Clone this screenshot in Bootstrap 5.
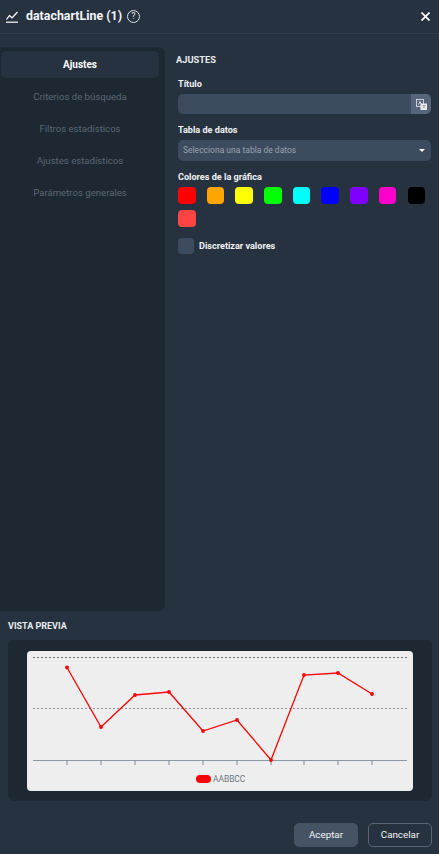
<!DOCTYPE html>
<html lang="es">

<head>
    <title>datachartLine</title>
    <link rel="stylesheet" href="https://cdn.jsdelivr.net/npm/bootstrap@5.3.0/dist/css/bootstrap.min.css">
    <style>
        html, body { height: 854px; overflow: hidden; }
        body { background: #273240; font-family: Roboto, "Liberation Sans", sans-serif; color: #fff; font-size: 9.5px; }
        .shell { height: 854px; }
        .top-bar { height: 34px; padding: 0 9px 0 6px; border-bottom: 1px solid #303c4b; }
        .top-title { font-size: 12.4px; font-weight: 700; color: #f2f4f6; margin-left: 8px; }
        .help-dot { width: 13px; height: 13px; border: 1px solid #dfe3e8; border-radius: 50%; font-size: 9px; line-height: 11px; text-align: center; margin-left: 5px; color: #dfe3e8; }
        .main-area { height: 578px; padding-top: 13px; }
        .side-menu { width: 165px; height: 564px; background: #1e2832; border-radius: 0 7px 7px 0; padding: 4px 6px 0 1px; flex: none; }
        .side-item { height: 32px; line-height: 28px; text-align: center; color: #5a6773; font-size: 9.6px; }
        .side-item.on { height: 27px; line-height: 27px; margin-bottom: 5px; background: #273240; color: #fff; font-weight: 700; font-size: 10px; border-radius: 5px; }
        .form-area { padding: 7px 8px 0 11px; flex-grow: 1; }
        .sect-title { font-size: 9.3px; font-weight: 700; color: #e8ebee; line-height: 11px; margin-bottom: 14px; }
        .fld-label { font-size: 9.1px; font-weight: 700; color: #f0f2f4; line-height: 11px; margin: 0 0 4px 2px; display: block; }
        .fld-input { margin-left: 2px; height: 20px; background: #3d4b5e; border-radius: 5px; overflow: hidden; margin-bottom: 11px; }
        .fld-input span { width: 20px; background: #57657a; }
        .fld-select { margin-left: 2px; height: 21px; background: #3d4b5e; border-radius: 5px; padding: 0 6px 0 5px; color: #97a2b0; font-size: 8.5px; margin-bottom: 11px; }
        .caret-down { width: 0; height: 0; border-left: 3.5px solid transparent; border-right: 3.5px solid transparent; border-top: 3.5px solid #fff; }
        .swatch-grid { margin-left: 2px; display: flex; flex-wrap: wrap; column-gap: 11.2px; row-gap: 6px; margin-bottom: 11px; }
        .swatch { width: 17.5px; height: 17px; border-radius: 4px; }
        .check-box { width: 16px; height: 16px; background: #3d4b5e; border-radius: 4px; margin-left: 2px; }
        .check-text { font-size: 9.1px; font-weight: 700; color: #f0f2f4; margin-left: 5px; padding-top: 1px; }
        .preview-title { font-size: 9px; font-weight: 700; color: #e8ebee; line-height: 11px; margin: 9px 0 8px 8px; }
        .preview-box { margin: 0 7px 0 8px; height: 161px; background: #1e2832; border-radius: 6px; padding: 11px 19px; }
        .chart-card { width: 386px; height: 140px; background: #eeeeee; border-radius: 4px; }
        .chart-card svg { display: block; }
        .legend-txt { font-family: Roboto, "Liberation Sans", sans-serif; font-size: 8.4px; fill: #6d7681; }
        .bottom-bar { padding: 22px 7px 0 0; gap: 10px; }
        .btn-ok, .btn-no { width: 64px; height: 24px; padding: 0; font-size: 9.8px; line-height: 22px; color: #f0f2f4; border-radius: 5px; }
        .btn-ok { background: #465364; border: 1px solid #465364; }
        .btn-no { background: transparent; border: 1px solid #5a6675; }
    </style>
</head>

<body>
    <div class="shell d-flex flex-column">
        <div class="top-bar d-flex align-items-center">
            <svg width="12" height="12" viewBox="0 0 12 12" fill="none" stroke="#fff" stroke-width="1.2">
                <path d="M0 11.2h12" />
                <path d="M0.5 8.5 3.5 4.5 6 7 11.5 1" />
            </svg>
            <span class="top-title">datachartLine (1)</span>
            <span class="help-dot">?</span>
            <svg class="ms-auto" width="9" height="9" viewBox="0 0 9 9" stroke="#fff" stroke-width="1.7">
                <path d="M0.5 0.5 8.5 8.5M8.5 0.5 0.5 8.5" />
            </svg>
        </div>

        <div class="main-area d-flex">
            <div class="side-menu">
                <div class="side-item on">Ajustes</div>
                <div class="side-item">Criterios de búsqueda</div>
                <div class="side-item">Filtros estadísticos</div>
                <div class="side-item">Ajustes estadísticos</div>
                <div class="side-item">Parámetros generales</div>
            </div>
            <div class="form-area">
                <div class="sect-title">AJUSTES</div>
                <label class="fld-label">Título</label>
                <div class="fld-input d-flex justify-content-end">
                    <span class="d-flex align-items-center justify-content-center">
                        <svg width="11" height="11" viewBox="0 0 11 11">
                            <rect x="0.5" y="0.5" width="7" height="7" fill="#57657a" stroke="#e6e9ed" stroke-width="0.8" />
                            <path d="M2.5 5.5 4 2.5 5.5 5.5" fill="none" stroke="#fff" stroke-width="0.8" />
                            <rect x="4.5" y="4.5" width="6.5" height="6.5" fill="#eef0f2" />
                            <path d="M6 6.5h4M9 6.5 6.5 9.5M7 7.5 9.5 9.5" fill="none" stroke="#8b96a5" stroke-width="0.7" />
                        </svg>
                    </span>
                </div>
                <label class="fld-label">Tabla de datos</label>
                <div class="fld-select d-flex align-items-center justify-content-between">
                    <span>Selecciona una tabla de datos</span>
                    <span class="caret-down"></span>
                </div>
                <label class="fld-label">Colores de la gráfica</label>
                <div class="swatch-grid">
                    <div class="swatch" style="background:#ff0000"></div>
                    <div class="swatch" style="background:#ffa500"></div>
                    <div class="swatch" style="background:#ffff00"></div>
                    <div class="swatch" style="background:#00ff00"></div>
                    <div class="swatch" style="background:#00ffff"></div>
                    <div class="swatch" style="background:#0000ff"></div>
                    <div class="swatch" style="background:#8000ff"></div>
                    <div class="swatch" style="background:#ff00cc"></div>
                    <div class="swatch" style="background:#000000"></div>
                    <div class="swatch" style="background:#ff4444"></div>
                </div>
                <div class="d-flex align-items-center">
                    <div class="check-box"></div>
                    <span class="check-text">Discretizar valores</span>
                </div>
            </div>
        </div>

        <div class="preview-title">VISTA PREVIA</div>
        <div class="preview-box">
            <div class="chart-card">
                <svg width="386" height="140" viewBox="0 0 386 140">
                    <path d="M6 6.5H380" stroke="#6f7780" stroke-width="1" stroke-dasharray="2 2" fill="none" />
                    <path d="M6 57.5H380" stroke="#8b929a" stroke-width="1" stroke-dasharray="2 2" fill="none" />
                    <path d="M6 109.5H380" stroke="#8a98a6" stroke-width="1" />
                    <path d="M40 110v4M74 110v4M108 110v4M142 110v4M176 110v4M210 110v4M244 110v4M277 110v4M311 110v4M345 110v4" stroke="#7d8894" stroke-width="1" />
                    <polyline points="40,16.5 74,76 108,44 142,41 176,80 210,69 244,109 277,24 311,22 345,43" fill="none" stroke="#ff0000" stroke-width="1.3" />
                    <g fill="#ff0000">
                        <circle cx="40" cy="16.5" r="1.9" />
                        <circle cx="74" cy="76" r="1.9" />
                        <circle cx="108" cy="44" r="1.9" />
                        <circle cx="142" cy="41" r="1.9" />
                        <circle cx="176" cy="80" r="1.9" />
                        <circle cx="210" cy="69" r="1.9" />
                        <circle cx="244" cy="109" r="1.9" />
                        <circle cx="277" cy="24" r="1.9" />
                        <circle cx="311" cy="22" r="1.9" />
                        <circle cx="345" cy="43" r="1.9" />
                        <rect x="169" y="124" width="15" height="8" rx="4" />
                    </g>
                    <text class="legend-txt" x="186" y="131">AABBCC</text>
                </svg>
            </div>
        </div>

        <div class="bottom-bar d-flex justify-content-end">
            <button type="button" class="btn btn-ok">Aceptar</button>
            <button type="button" class="btn btn-no">Cancelar</button>
        </div>
    </div>

    <script src="https://cdn.jsdelivr.net/npm/bootstrap@5.3.0/dist/js/bootstrap.bundle.min.js"></script>
</body>

</html>
